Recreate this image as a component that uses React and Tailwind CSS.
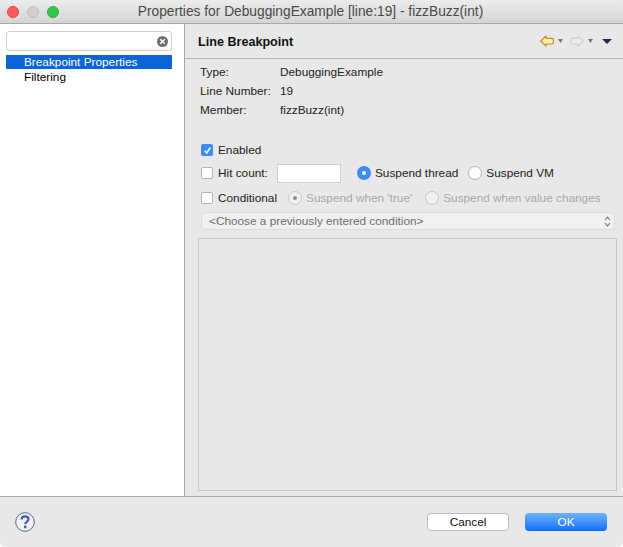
const font = "font-['Liberation_Sans',Arial,sans-serif]";

function TrafficLight({ color, border }) {
  return <span className={`w-3 h-3 rounded-full border ${color} ${border}`}></span>;
}

function SmallCaret({ color }) {
  return (
    <svg width="5" height="4" viewBox="0 0 5 4" className="block">
      <path d="M0 0h5L2.5 4z" fill={color} />
    </svg>
  );
}

function ArrowLeft() {
  return (
    <svg width="14" height="12" viewBox="0 0 14 12" className="block">
      <path d="M0.8 6 L6 0.8 V3.4 H12 Q13.3 3.4 13.3 4.6 V7.8 Q13.3 9 12 9 H6 V11.2 Z" fill="#fdf0b4" stroke="#c98a1b" strokeWidth="1.2" strokeLinejoin="round" />
    </svg>
  );
}

function ArrowRight() {
  return (
    <svg width="14" height="12" viewBox="0 0 14 12" className="block">
      <path d="M13.2 6 L8 0.8 V3.4 H2 Q0.7 3.4 0.7 4.6 V7.8 Q0.7 9 2 9 H8 V11.2 Z" fill="#ececec" stroke="#d2d2d2" strokeWidth="1.2" strokeLinejoin="round" />
    </svg>
  );
}

function Checkbox({ checked }) {
  if (checked) {
    return (
      <span className="w-3 h-3 shrink-0 rounded-[2px] bg-[#3b8df5] flex items-center justify-center">
        <svg width="9" height="9" viewBox="0 0 9 9">
          <path d="M1.8 4.8 L3.7 7 L7.2 1.6" fill="none" stroke="white" strokeWidth="1.6" />
        </svg>
      </span>
    );
  }
  return <span className="w-3 h-3 shrink-0 rounded-[2px] bg-white border border-[#b4b4b4]"></span>;
}

function Radio({ state }) {
  if (state === "on") {
    return (
      <span className="w-[14px] h-[14px] shrink-0 rounded-full bg-[#3b8df5] flex items-center justify-center">
        <span className="w-1 h-1 rounded-full bg-white"></span>
      </span>
    );
  }
  if (state === "disabledOn") {
    return (
      <span className="w-[14px] h-[14px] shrink-0 rounded-full bg-[#f0f0f0] border border-[#c8c8c8] flex items-center justify-center">
        <span className="w-1 h-1 rounded-full bg-[#8c8c8c]"></span>
      </span>
    );
  }
  if (state === "disabled") {
    return <span className="block w-[14px] h-[14px] shrink-0 rounded-full bg-[#f0f0f0] border border-[#c8c8c8]"></span>;
  }
  return <span className="block w-[14px] h-[14px] shrink-0 rounded-full bg-white border border-[#b4b4b4]"></span>;
}

function InfoRow({ label, value }) {
  return (
    <div className="flex h-[19px] items-center">
      <span className="w-[80px]">{label}</span>
      <span>{value}</span>
    </div>
  );
}

export default function App() {
  return (
    <div className={`${font} w-[623px] h-[547px] flex flex-col bg-[#e8e8e8] text-[11.8px] leading-[18px] text-[#222] overflow-hidden rounded-b-[5px]`}>
      <div className="h-[24px] shrink-0 flex items-center px-[7px] bg-gradient-to-b from-[#ececec] to-[#d4d4d4] border-b border-[#a8a8a8] rounded-t-[5px]">
        <div className="flex gap-[8px]">
          <TrafficLight color="bg-[#fc5b57]" border="border-[#e2463f]" />
          <TrafficLight color="bg-[#cfcfcf]" border="border-[#bdbdbd]" />
          <TrafficLight color="bg-[#34c84a]" border="border-[#2dac3f]" />
        </div>
        <span className="flex-1 text-center text-[13.75px] text-[#4a4a4a] pr-[54px] whitespace-nowrap">Properties for DebuggingExample [line:19] - fizzBuzz(int)</span>
      </div>

      <div className="flex flex-1 min-h-0">
        <div className="w-[185px] shrink-0 bg-white border-r border-[#a8a8a8] pt-[7px]">
          <div className="mx-[6px] w-[166px] h-[20px] bg-white border border-[#cfcfcf] rounded-[3px] flex items-center justify-end pr-[3px]">
            <span className="w-[11px] h-[11px] rounded-full bg-[#6e6e6e] flex items-center justify-center">
              <svg width="7" height="7" viewBox="0 0 7 7">
                <path d="M1.2 1.2 L5.8 5.8 M5.8 1.2 L1.2 5.8" stroke="white" strokeWidth="1.4" />
              </svg>
            </span>
          </div>
          <div className="mt-[4px] ml-[6px] w-[166px] h-[14px] bg-[#0a64d8] text-white pl-[18px] flex items-center">Breakpoint Properties</div>
          <div className="ml-[6px] w-[166px] h-[15px] text-black pl-[18px] flex items-center pt-[1px]">Filtering</div>
        </div>

        <div className="flex-1 min-w-0 flex flex-col">
          <div className="h-[35px] shrink-0 flex items-center justify-between border-b border-[#b4b4b4] pl-[13px] pr-[11px]">
            <span className="font-bold text-[12.6px] text-[#111] pt-[1px]">Line Breakpoint</span>
            <div className="flex items-center">
              <ArrowLeft />
              <span className="ml-[4px]"><SmallCaret color="#777" /></span>
              <span className="ml-[7px]"><ArrowRight /></span>
              <span className="ml-[4px]"><SmallCaret color="#777" /></span>
              <span className="ml-[9px]">
                <svg width="10" height="5" viewBox="0 0 10 5" className="block"><path d="M0 0h10L5 5z" fill="#2a1f66" /></svg>
              </span>
            </div>
          </div>

          <div className="flex-1 min-h-0 flex flex-col pl-[15px] pr-[8px]">
            <div className="pt-[3px]">
              <InfoRow label="Type:" value="DebuggingExample" />
              <InfoRow label="Line Number:" value="19" />
              <InfoRow label="Member:" value="fizzBuzz(int)" />
            </div>

            <div className="mt-[21px] flex items-center gap-[5px] h-[20px] pl-[1px]">
              <Checkbox checked />
              <span>Enabled</span>
            </div>

            <div className="mt-[3px] flex items-center h-[20px] pl-[1px]">
              <Checkbox />
              <span className="ml-[5px] w-[59px]">Hit count:</span>
              <span className="w-[64px] h-[19px] bg-white border border-[#cfcfcf]"></span>
              <span className="ml-[16px]"><Radio state="on" /></span>
              <span className="ml-[4px]">Suspend thread</span>
              <span className="ml-[10px]"><Radio /></span>
              <span className="ml-[4px]">Suspend VM</span>
            </div>

            <div className="mt-[5px] flex items-center h-[20px] pl-[1px]">
              <Checkbox />
              <span className="ml-[5px]">Conditional</span>
              <span className="ml-[11px]"><Radio state="disabledOn" /></span>
              <span className="ml-[4px] text-[#a8a8a8]">Suspend when 'true'</span>
              <span className="ml-[13px]"><Radio state="disabled" /></span>
              <span className="ml-[4px] text-[#a8a8a8] whitespace-nowrap">Suspend when value changes</span>
            </div>

            <div className="mt-[4px] ml-[1px] h-[18px] shrink-0 rounded-[4px] bg-[#f0f0f0] border border-[#dcdcdc] flex items-center justify-between pl-[7px] pr-[3px] text-[#6e6e6e]">
              <span>&lt;Choose a previously entered condition&gt;</span>
              <svg width="7" height="11" viewBox="0 0 7 11" className="block">
                <path d="M1 4 L3.5 1.2 L6 4 M1 7 L3.5 9.8 L6 7" fill="none" stroke="#777" strokeWidth="1.1" />
              </svg>
            </div>

            <div className="mt-[8px] mb-[5px] -ml-[2px] -mr-[2px] flex-1 min-h-0 border border-[#c8c8c8]"></div>
          </div>
        </div>
      </div>

      <div className="h-[51px] shrink-0 border-t border-[#a8a8a8] flex items-center pl-[15px] pr-[16px]">
        <svg width="20" height="20" viewBox="0 0 20 20">
          <circle cx="10" cy="10" r="9.3" fill="#f2f2f4" stroke="#4f6a92" strokeWidth="1" />
          <path d="M6.6 7.6 C6.6 5.4 8.2 4.4 10 4.4 C12.1 4.4 13.5 5.6 13.5 7.3 C13.5 9.6 10.2 9.6 10.2 12.2" fill="none" stroke="#44608f" strokeWidth="2.2" />
          <circle cx="10.2" cy="15" r="1.4" fill="#44608f" />
        </svg>
        <button className="ml-auto w-[82px] h-[18px] bg-white border border-[#bcbcbc] rounded-[4px] text-[#111] flex items-center justify-center">Cancel</button>
        <button className="ml-[16px] w-[82px] h-[18px] rounded-[4px] bg-gradient-to-b from-[#6cb3fa] to-[#0a6cff] text-white flex items-center justify-center">OK</button>
      </div>
    </div>
  );
}
